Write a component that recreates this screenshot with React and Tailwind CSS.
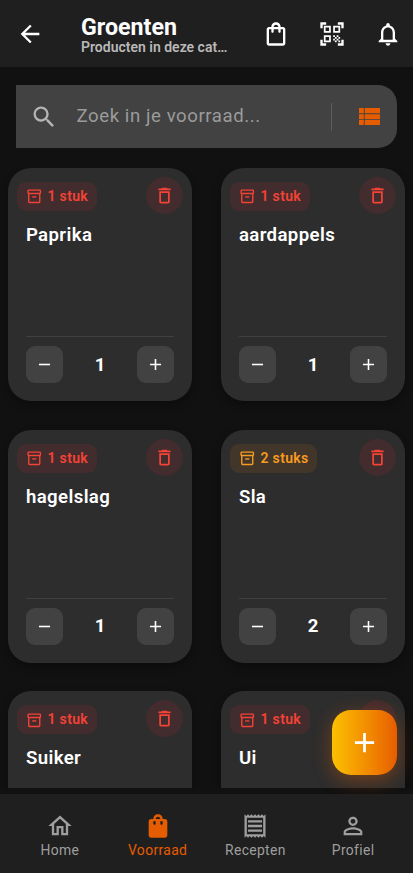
import React from 'react';
import {
  MdAdd,
  MdArrowBack,
  MdDeleteOutline,
  MdNotificationsNone,
  MdOutlineHome,
  MdOutlineInventory2,
  MdOutlineReceipt,
  MdOutlineShoppingBag,
  MdPersonOutline,
  MdQrCodeScanner,
  MdRemove,
  MdSearch,
  MdShoppingBag,
} from 'react-icons/md';

const products = [
  { name: 'Paprika', count: 1 },
  { name: 'aardappels', count: 1 },
  { name: 'hagelslag', count: 1 },
  { name: 'Sla', count: 2 },
  { name: 'Suiker', count: 1 },
  { name: 'Ui', count: 1 },
];

const tabs = [
  { icon: MdOutlineHome, label: 'Home' },
  { icon: MdShoppingBag, label: 'Voorraad', active: true },
  { icon: MdOutlineReceipt, label: 'Recepten' },
  { icon: MdPersonOutline, label: 'Profiel' },
];

const ListIcon = ({ className }) => (
  <svg viewBox="0 0 21 17" fill="currentColor" className={className}>
    <path d="M0 0h4.8v5.3H0zM5.7 0H21v5.3H5.7zM0 6.2h4.8v5H0zM5.7 6.2H21v5H5.7zM0 12.1h4.8V17H0zM5.7 12.1H21V17H5.7z" />
  </svg>
);

const Header = () => (
  <header className="flex h-[67px] shrink-0 items-center bg-[#1f1f1f] pr-[11px] pl-4 text-white">
    <button aria-label="Terug">
      <MdArrowBack className="size-7" />
    </button>
    <div className="ml-[37px] w-[150px] pt-px">
      <h1 className="text-[23.2px] leading-[26px] font-bold">Groenten</h1>
      <p className="text-[14px] leading-[15px] font-semibold whitespace-nowrap text-[#b8b8b8]">Producten in deze cat…</p>
    </div>
    <div className="ml-auto flex gap-7">
      <MdOutlineShoppingBag className="size-7" />
      <MdQrCodeScanner className="size-7" />
      <MdNotificationsNone className="size-7" />
    </div>
  </header>
);

const SearchBar = () => (
  <div className="mx-4 mt-[18px] mb-5 flex h-[63px] shrink-0 items-center rounded-r-[19px] bg-[#424242] pr-[17px] pl-[13.5px]">
    <MdSearch className="size-7 text-[#b5b5b5]" />
    <input
      className="ml-[19px] w-[254.5px] bg-transparent pt-px text-[18.6px] tracking-[0.58px] outline-none placeholder:text-[#9b9b9b]"
      placeholder="Zoek in je voorraad..."
    />
    <div className="h-7 w-px bg-[#5c5c5c]" />
    <ListIcon className="ml-auto h-[17px] w-[21px] text-[#e65c00]" />
  </div>
);

const ProductCard = ({ name, count }) => (
  <article className="flex h-[233px] flex-col rounded-[23px] bg-[#2d2d2d] px-[18.3px] pt-[9px] pb-[18px] text-white shadow-[0_4px_9px_rgba(0,0,0,0.3)]">
    <div className="-mx-[9px] flex items-center justify-between">
      <span
        className={`mt-0.5 flex h-[29px] items-center gap-[5px] rounded-[9px] pr-[8.5px] pl-[9px] text-[14px] font-semibold tracking-[0.35px] ${
          count > 1 ? 'bg-[#42362a] text-[#f89b21]' : 'bg-[#422c2d] text-[#f44336]'
        }`}
      >
        <MdOutlineInventory2 className="size-[16.5px]" />
        {count} {count > 1 ? 'stuks' : 'stuk'}
      </span>
      <button className="flex size-[37px] items-center justify-center rounded-full bg-[#422c2d] text-[#f44336]" aria-label="Verwijder">
        <MdDeleteOutline className="size-[21px]" />
      </button>
    </div>
    <h2 className="mt-[9px] text-[18.6px] leading-6 font-semibold tracking-[0.4px]">{name}</h2>
    <div className="mt-auto flex items-center justify-between border-t border-[#404040] pt-[9px]">
      <button className="flex size-[37px] items-center justify-center rounded-[9px] bg-[#424242]" aria-label="Minder">
        <MdRemove className="size-[19px]" />
      </button>
      <span className="text-[18.6px] leading-6 font-bold">{count}</span>
      <button className="flex size-[37px] items-center justify-center rounded-[9px] bg-[#424242]" aria-label="Meer">
        <MdAdd className="size-[19px]" />
      </button>
    </div>
  </article>
);

const BottomNav = () => (
  <nav className="relative z-10 mt-1.5 grid h-[79px] shrink-0 grid-cols-4 bg-[#1f1f1f] px-[11px] pt-[18px]">
    {tabs.map(({ icon: Icon, label, active }) => (
      <button
        key={label}
        className={`flex flex-col items-center text-[13.9px] leading-5 tracking-[0.35px] ${active ? 'text-[#e65c00]' : 'text-[#9e9e9e]'}`}
      >
        <Icon className="size-7" />
        {label}
      </button>
    ))}
  </nav>
);

export default function App() {
  return (
    <div className="relative flex h-[873px] w-[413px] flex-col overflow-hidden bg-[#111111] font-['Roboto',sans-serif]">
      <Header />
      <SearchBar />
      <main className="grid min-h-0 flex-1 grid-cols-2 content-start gap-x-[28.2px] gap-y-[28.7px] overflow-hidden px-[7.6px]">
        {products.map((product) => (
          <ProductCard key={product.name} {...product} />
        ))}
      </main>
      <BottomNav />
      <button
        className="absolute right-4 bottom-[98px] flex size-[65px] items-center justify-center rounded-[19px] bg-linear-to-r from-[#fbc002] to-[#e65c00] text-white shadow-[0_5px_19px_rgba(230,92,0,0.4)]"
        aria-label="Toevoegen"
      >
        <MdAdd className="size-[33px]" />
      </button>
    </div>
  );
}
